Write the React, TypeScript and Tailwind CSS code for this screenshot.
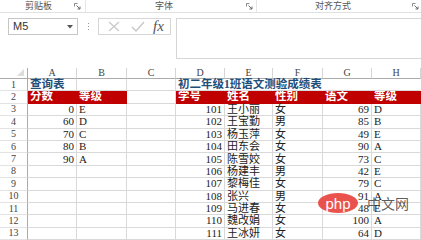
import React from 'react';

const FONT = { fontFamily: '"Liberation Serif", "Noto Sans CJK SC", serif' };

type Row = { n: number; cells: (string | number)[]; red?: boolean; title?: boolean };

const names = ['王小丽', '王宝勤', '杨玉萍', '田东会', '陈雪姣', '杨建丰', '黎梅佳', '张兴', '马进春', '魏改娟', '王冰妍'];
const sex = ['女', '男', '女', '女', '女', '男', '女', '男', '女', '女', '女'];
const score = [69, 85, 49, 90, 73, 42, 79, 91, 48, 100, 64];
const grade = ['D', 'B', 'E', 'A', 'C', 'E', 'C', 'A', 'E', 'A', 'D'];
const lookup: [string | number, string][] = [[0, 'E'], [60, 'D'], [70, 'C'], [80, 'B'], [90, 'A']];

const rows: Row[] = [
  { n: 1, cells: ['查询表', '', '', '初二年级1班语文测验成绩表', '', '', '', ''], title: true },
  { n: 2, cells: ['分数', '等级', '', '学号', '姓名', '性别', '语文', '等级'], red: true },
  ...names.map((nm, i) => ({
    n: i + 3,
    cells: [lookup[i]?.[0] ?? '', lookup[i]?.[1] ?? '', '', 101 + i, nm, sex[i], score[i], grade[i]],
  })),
];

const COLS = ['A', 'B', 'C', 'D', 'E', 'F', 'G', 'H'];

const Launcher = () => (
  <svg width="7" height="7" viewBox="0 0 7 7" className="shrink-0">
    <path d="M0.5 0.5h3M0.5 0.5v3" stroke="#8a8a8a" strokeWidth="1" fill="none" />
    <path d="M2.5 2.5l3.5 3.5M6 3.5v2.5h-2.5" stroke="#6a6a6a" strokeWidth="1" fill="none" />
  </svg>
);

const App: React.FC = () => {
  return (
    <div className="relative w-[421px] h-[240px] overflow-hidden bg-white" style={FONT}>
      {/* Ribbon group labels */}
      <div className="flex h-[13px] border-b border-[#e1e1e1] text-[9px] text-[#555] leading-[12px]" style={{ fontFamily: '"Noto Sans CJK SC", sans-serif' }}>
        <div className="w-[85px] flex items-center">
          <span className="ml-[25px]">剪贴板</span>
          <span className="ml-auto mr-[4px]"><Launcher /></span>
        </div>
        <div className="w-[171px] flex items-center border-l border-[#e6e6e6]">
          <span className="ml-[69px]">字体</span>
          <span className="ml-auto mr-[3px]"><Launcher /></span>
        </div>
        <div className="flex-1 flex items-center border-l border-[#e6e6e6]">
          <span className="ml-[58px]">对齐方式</span>
          <span className="ml-auto mr-[2px]"><Launcher /></span>
        </div>
      </div>

      {/* Formula bar */}
      <div className="flex h-[55px] pt-[5px]">
        <div className="ml-[8px] w-[70px] h-[17px] border border-[#c6c6c6] flex items-center pl-[4px] pr-[4px] text-[11px] text-[#333]" style={{ fontFamily: '"Liberation Sans", sans-serif' }}>
          <span>M5</span>
          <svg width="6" height="4" viewBox="0 0 6 4" className="ml-auto">
            <path d="M0 0h6L3 3.5z" fill="#555" />
          </svg>
        </div>
        <div className="w-[20px] h-[17px] flex flex-col items-center justify-center gap-[2px]">
          <span className="w-[1px] h-[1px] bg-[#999]" />
          <span className="w-[1px] h-[1px] bg-[#999]" />
          <span className="w-[1px] h-[1px] bg-[#999]" />
        </div>
        <div className="w-[73px] h-[17px] border border-[#d6d6d6] flex items-center">
          <svg width="12" height="11" viewBox="0 0 12 11" className="ml-[9px]">
            <path d="M1 1l10 9M11 1L1 10" stroke="#c8c8c8" strokeWidth="1.2" />
          </svg>
          <svg width="14" height="11" viewBox="0 0 14 11" className="ml-[11px]">
            <path d="M1 6l4 4L13 1" stroke="#c8c8c8" strokeWidth="1.4" fill="none" />
          </svg>
          <span className="ml-[8px] italic text-[15px] leading-none text-[#555]" style={{ fontFamily: '"Liberation Serif", serif' }}>fx</span>
        </div>
        <div className="ml-[5px] flex-1 h-[41px] border border-[#d6d6d6] border-r-0" />
      </div>

      {/* Sheet grid */}
      <div className="grid grid-cols-[28px_49px_50px_49px_49px_48px_50px_49px_49px] grid-rows-[11px_repeat(13,12.4px)] text-[11px] leading-none">
        {/* column headers */}
        <div className="relative border-r border-b border-[#ababab]">
          <svg width="7" height="7" viewBox="0 0 7 7" className="absolute right-[3px] bottom-[2px]">
            <path d="M7 0v7H0z" fill="#dcdcdc" />
          </svg>
        </div>
        {COLS.map(c => (
          <div key={c} className="border-r border-b border-[#d5d5d5] border-b-[#ababab] flex items-center justify-center text-[10px] text-[#444]">
            {c}
          </div>
        ))}

        {rows.map(r => (
          <React.Fragment key={r.n}>
            <div className="border-r border-b border-[#ababab] border-b-[#e3e3e3] flex items-center justify-center text-[10px] text-[#444]">
              {r.n}
            </div>
            {r.cells.map((v, ci) => {
              const isNum = typeof v === 'number';
              const isRed = r.red && ci !== 2;
              const cls = isRed
                ? 'bg-[#c00000] text-white font-bold text-[11.5px] border-b border-[#c00000] pl-[2px]'
                : r.title
                ? 'text-[#1f4e79] font-bold text-[11.5px] border-r border-b border-[#d9d9d9] pl-[2px] whitespace-nowrap overflow-visible z-10'
                : `text-[#222] border-r border-b border-[#d9d9d9] ${isNum ? 'justify-end pr-[2px]' : 'pl-[2px]'}`;
              const noRight = r.title && ci >= 3 ? 'border-r-transparent' : '';
              return (
                <div key={ci} className={`flex items-center ${cls} ${noRight}`}>
                  {v}
                </div>
              );
            })}
          </React.Fragment>
        ))}
      </div>

      {/* watermark */}
      <div className="absolute left-[318px] top-[193px] flex items-center pointer-events-none">
        <div className="w-[40px] h-[20px] rounded-[50%] bg-[#e8403a]/90 flex items-center justify-center text-white text-[15px] leading-none" style={{ fontFamily: '"Liberation Sans", sans-serif' }}>
          php
        </div>
        <span className="ml-[9px] text-[14px] text-[#333]/80 leading-none" style={{ fontFamily: '"Noto Sans CJK SC", sans-serif' }}>中文网</span>
      </div>
    </div>
  );
};

export default App;
